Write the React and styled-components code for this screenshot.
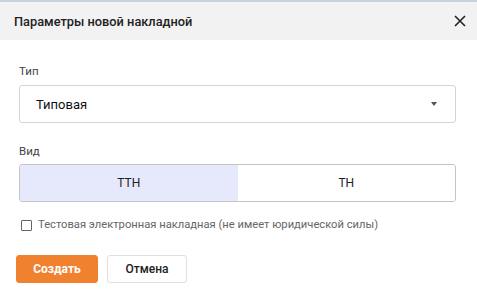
import React, { useState } from 'react'
import styled, { createGlobalStyle } from 'styled-components'

const GlobalStyle = createGlobalStyle`
  html, body {
    margin: 0;
    padding: 0;
    background: #fff;
  }
  body {
    font-family: Roboto, 'Liberation Sans', Arial, sans-serif;
    color: #222;
  }
`

const Dialog = styled.div`
  width: 477px;
  height: 292px;
  border-top: 2px solid #c8d2e3;
  box-sizing: border-box;
  background: #fff;
`

const Header = styled.div`
  height: 38px;
  background: #f2f2f2;
  display: flex;
  align-items: center;
  justify-content: space-between;
  padding: 0 10px 0 14px;
`

const Title = styled.h2`
  margin: 0;
  font-size: 12.8px;
  font-weight: 500;
  color: #222;
`

const CloseBtn = styled.button`
  border: 0;
  background: none;
  padding: 0;
  width: 14px;
  height: 14px;
  display: flex;
  align-items: center;
  justify-content: center;
  cursor: pointer;
`

const Body = styled.div`
  padding: 23px 21px 0 19px;
  display: flex;
  flex-direction: column;
`

const Label = styled.div`
  font-size: 11.5px;
  line-height: 16px;
  color: #444;
  margin-top: ${p => p.$top || 0}px;
  margin-bottom: ${p => p.$bottom || 6}px;
`

const Select = styled.div`
  height: 38px;
  box-sizing: border-box;
  border: 1px solid #d4d4d4;
  border-radius: 3px;
  display: flex;
  align-items: center;
  justify-content: space-between;
  padding: 0 18px 0 16px;
  font-size: 13px;
  color: #111;
`

const Caret = styled.span`
  width: 0;
  height: 0;
  border-left: 3.5px solid transparent;
  border-right: 3.5px solid transparent;
  border-top: 4px solid #555;
`

const Toggle = styled.div`
  height: 38px;
  box-sizing: border-box;
  border: 1px solid #c4c4c4;
  border-radius: 3px;
  display: grid;
  grid-template-columns: 1fr 1fr;
  overflow: hidden;
`

const Option = styled.button`
  border: 0;
  margin: 0;
  font-family: inherit;
  font-size: 12px;
  color: #222;
  background: ${p => (p.$active ? '#e6e9fc' : '#fff')};
  cursor: pointer;
`

const CheckRow = styled.label`
  margin-top: 15px;
  display: flex;
  align-items: center;
  gap: 6px;
  padding-left: 2px;
  font-size: 11.2px;
  line-height: 16px;
  color: #666;
`

const Box = styled.span`
  width: 11px;
  height: 11px;
  box-sizing: border-box;
  border: 1px solid #666;
  border-radius: 1px;
  background: ${p => (p.$checked ? '#666' : '#fff')};
`

const Actions = styled.div`
  margin-top: 22px;
  margin-left: -3px;
  display: flex;
  gap: 9px;
`

const Button = styled.button`
  height: 28px;
  width: ${p => p.$w}px;
  box-sizing: border-box;
  border-radius: 3px;
  font-family: inherit;
  font-size: 12px;
  cursor: pointer;
  border: 1px solid ${p => (p.$primary ? '#f0812f' : '#e0e0e0')};
  background: ${p => (p.$primary ? '#f0812f' : '#fff')};
  color: ${p => (p.$primary ? '#fff' : '#222')};
  font-weight: ${p => (p.$primary ? 700 : 500)};
`

export default function App () {
  const [kind, setKind] = useState('ttn')
  const [test, setTest] = useState(false)

  return (
    <Dialog>
      <GlobalStyle />
      <Header>
        <Title>Параметры новой накладной</Title>
        <CloseBtn aria-label='close'>
          <svg width='12' height='12' viewBox='0 0 12 12'>
            <path d='M1 1 L11 11 M11 1 L1 11' stroke='#222' strokeWidth='1.6' />
          </svg>
        </CloseBtn>
      </Header>
      <Body>
        <Label>Тип</Label>
        <Select>
          <span>Типовая</span>
          <Caret />
        </Select>
        <Label $top={20} $bottom={5}>Вид</Label>
        <Toggle>
          <Option $active={kind === 'ttn'} onClick={() => setKind('ttn')}>ТТН</Option>
          <Option $active={kind === 'tn'} onClick={() => setKind('tn')}>ТН</Option>
        </Toggle>
        <CheckRow onClick={() => setTest(!test)}>
          <Box $checked={test} />
          Тестовая электронная накладная (не имеет юридической силы)
        </CheckRow>
        <Actions>
          <Button $primary $w={82}>Создать</Button>
          <Button $w={80}>Отмена</Button>
        </Actions>
      </Body>
    </Dialog>
  )
}
